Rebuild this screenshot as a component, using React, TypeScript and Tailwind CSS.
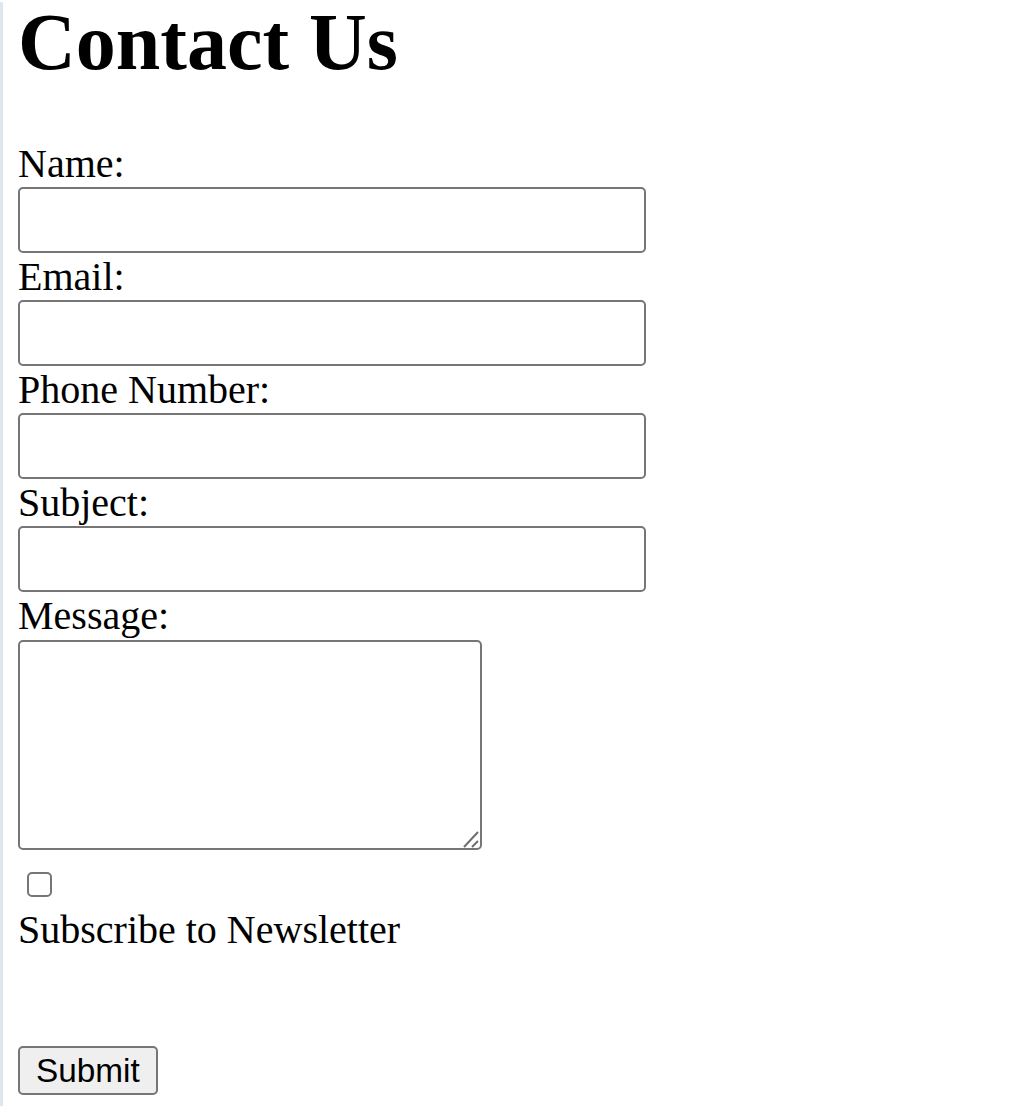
import React from "react";

const serif = { fontFamily: '"Liberation Serif", "Times New Roman", serif' };

function Field({ label }: { label: string }) {
  return (
    <div>
      <label className="block h-[47px] text-[40px] leading-[47px] text-black">{label}</label>
      <input
        type="text"
        className="block h-[66px] w-[628px] rounded-[5px] border-2 border-[#767676] bg-white outline-none"
      />
    </div>
  );
}

export default function App() {
  return (
    <div
      className="min-h-[1106px] w-full border-l-[3px] border-[#dfe6ef] bg-white pl-[15px] text-black"
      style={serif}
    >
      <h1 className="mt-[2px] mb-[58px] h-[80px] text-[80px] font-bold leading-[80px]">Contact Us</h1>
      <form className="flex flex-col items-start" onSubmit={(e) => e.preventDefault()}>
        <Field label="Name:" />
        <Field label="Email:" />
        <Field label="Phone Number:" />
        <Field label="Subject:" />
        <label className="block h-[47px] text-[40px] leading-[47px]">Message:</label>
        <div className="relative mt-[1px] h-[210px] w-[464px]">
          <textarea className="block h-[210px] w-[464px] resize-none rounded-[5px] border-2 border-[#767676] bg-white outline-none" />
          <svg
            className="pointer-events-none absolute right-0 bottom-0"
            width="22"
            height="22"
            viewBox="0 0 22 22"
          >
            <line x1="4" y1="19" x2="18" y2="4" stroke="#6e6e6e" strokeWidth="2" />
            <line x1="12" y1="19" x2="18" y2="13" stroke="#6e6e6e" strokeWidth="2" />
          </svg>
        </div>
        <input
          type="checkbox"
          className="mt-[22px] ml-[9px] block h-[25px] w-[25px] appearance-none rounded-[5px] border-2 border-[#767676] bg-white"
        />
        <label className="mt-[9px] block h-[47px] text-[40px] leading-[47px]">Subscribe to Newsletter</label>
        <button
          type="submit"
          className="mt-[93px] h-[49px] rounded-[5px] border-2 border-[#767676] bg-[#efefef] px-[16px] text-[33.33px] leading-[41px] text-black"
          style={{ fontFamily: '"Liberation Sans", Arial, sans-serif' }}
        >
          Submit
        </button>
      </form>
    </div>
  );
}
